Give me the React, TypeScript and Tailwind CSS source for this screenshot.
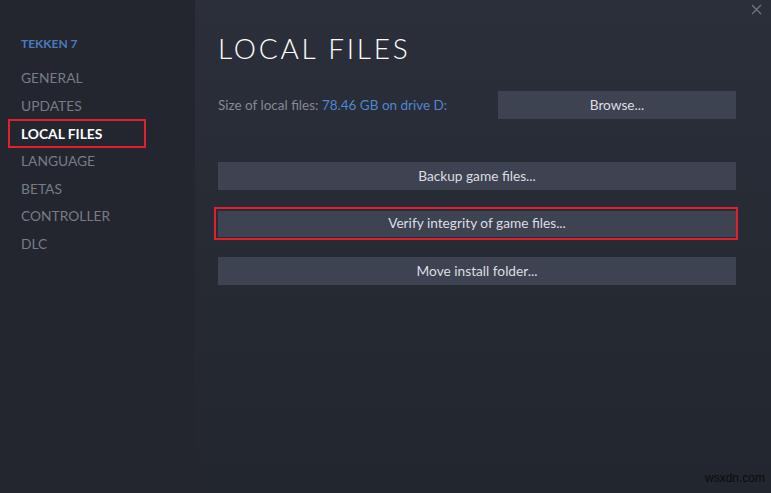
import React from "react";

const nav = ["GENERAL", "UPDATES", "LOCAL FILES", "LANGUAGE", "BETAS", "CONTROLLER", "DLC"];

function Btn({ children }: { children: React.ReactNode }) {
  return (
    <div className="h-[28px] bg-[#3d4350] flex items-center justify-center text-[13.7px] text-[#dcdee2]">
      {children}
    </div>
  );
}

export default function App() {
  return (
    <div
      className="w-[771px] h-[493px] flex overflow-hidden relative"
      style={{ fontFamily: "Lato, 'Open Sans', sans-serif" }}
    >
      <div className="w-[195px] shrink-0 bg-[#23262e] pt-[35px] flex flex-col">
        <div className="pl-[21px] text-[12px] font-bold text-[#4b7ac0] h-[18px] leading-[18px]">TEKKEN 7</div>
        <div className="mt-[12px] flex flex-col">
          {nav.map((n) => {
            const active = n === "LOCAL FILES";
            return (
              <div key={n} className="h-[27.6px] flex items-center">
                {active ? (
                  <div className="ml-[8px] w-[138px] h-[29px] border-2 border-[#e0202c] flex items-center pl-[11px] text-[13.8px] font-bold text-white">
                    {n}
                  </div>
                ) : (
                  <div className="pl-[21px] text-[13.8px] text-[#777c86]">{n}</div>
                )}
              </div>
            );
          })}
        </div>
      </div>
      <div className="flex-1 bg-gradient-to-b from-[#2b2f39] to-[#22262e] pl-[23px] pr-[35px] pt-[31px] flex flex-col">
        <div className="text-[28px] leading-[34px] font-light tracking-[2.8px] text-white">LOCAL FILES</div>
        <div className="mt-[26px] flex items-center justify-between h-[28px]">
          <div className="text-[13.5px] text-[#858a94]">
            Size of local files: <span className="text-[#4f86cf]">78.46 GB on drive D:</span>
          </div>
          <div className="w-[238px] h-[28px] bg-[#3d4350] flex items-center justify-center text-[13.7px] text-[#dcdee2]">
            Browse...
          </div>
        </div>
        <div className="mt-[43px] flex flex-col">
          <Btn>Backup game files...</Btn>
          <div className="mt-[17px] -ml-[4px] -mr-[2px] border-2 border-[#e0202c] pt-[1.5px] pb-[1.5px] pl-[2px]">
            <div className="h-[26px] bg-[#3d4350] flex items-center justify-center text-[13.7px] text-[#dcdee2]">
              Verify integrity of game files...
            </div>
          </div>
          <div className="mt-[17px]">
            <Btn>Move install folder...</Btn>
          </div>
        </div>
      </div>
      <div className="absolute top-[4px] right-[9px]">
        <svg width="11" height="11" viewBox="0 0 11 11" stroke="#70757f" strokeWidth="1.3">
          <path d="M1 1L10 10M10 1L1 10" />
        </svg>
      </div>
      <div className="absolute bottom-[6px] right-[6px] text-[12px] text-[#0c0c0c]" style={{ fontFamily: "'Liberation Sans', sans-serif" }}>
        wsxdn.com
      </div>
    </div>
  );
}
